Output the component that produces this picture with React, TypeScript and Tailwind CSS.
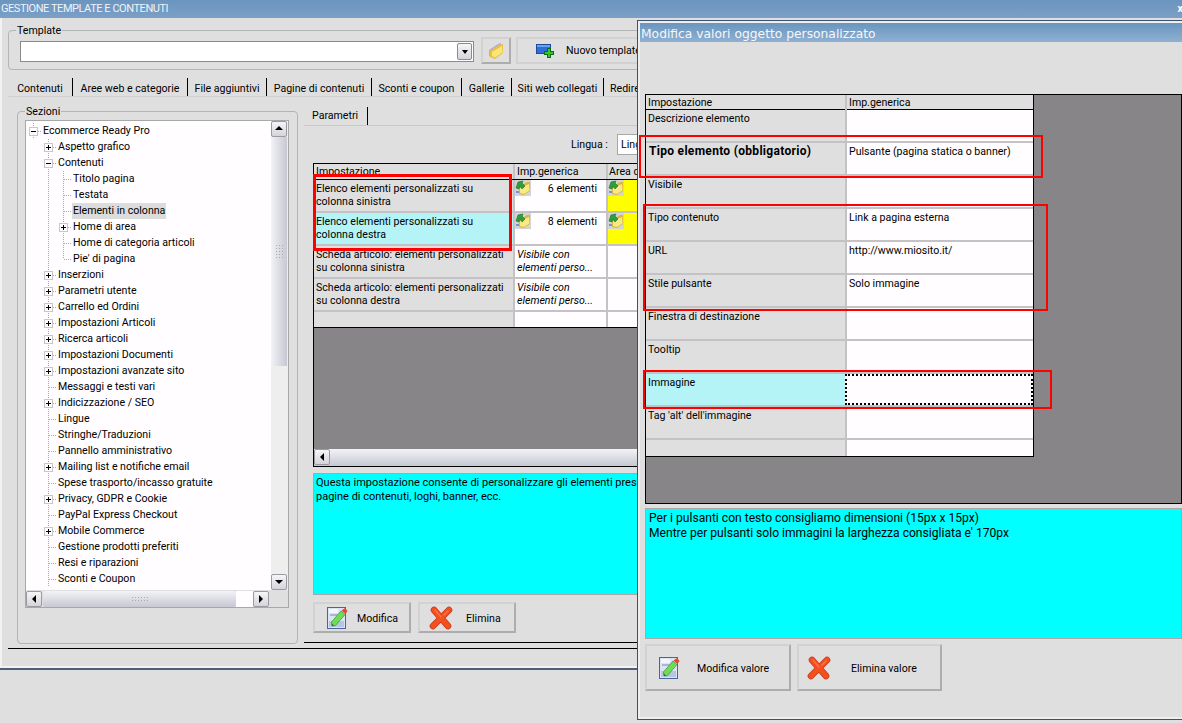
import type { ReactNode } from 'react'

const font = "font-['Roboto',sans-serif] text-[10.6px] text-black"

type Cell = 'plus' | 'minus' | 'branch' | 'last' | 'pass' | 'none'

const tree: { cells: Cell[]; label: string; selected?: boolean }[] = [
  { cells: ['minus'], label: 'Ecommerce Ready Pro' },
  { cells: ['none', 'plus'], label: 'Aspetto grafico' },
  { cells: ['none', 'minus'], label: 'Contenuti' },
  { cells: ['none', 'pass', 'branch'], label: 'Titolo pagina' },
  { cells: ['none', 'pass', 'branch'], label: 'Testata' },
  { cells: ['none', 'pass', 'branch'], label: 'Elementi in colonna', selected: true },
  { cells: ['none', 'pass', 'plus'], label: 'Home di area' },
  { cells: ['none', 'pass', 'branch'], label: 'Home di categoria articoli' },
  { cells: ['none', 'pass', 'last'], label: "Pie' di pagina" },
  { cells: ['none', 'plus'], label: 'Inserzioni' },
  { cells: ['none', 'plus'], label: 'Parametri utente' },
  { cells: ['none', 'plus'], label: 'Carrello ed Ordini' },
  { cells: ['none', 'plus'], label: 'Impostazioni Articoli' },
  { cells: ['none', 'plus'], label: 'Ricerca articoli' },
  { cells: ['none', 'plus'], label: 'Impostazioni Documenti' },
  { cells: ['none', 'plus'], label: 'Impostazioni avanzate sito' },
  { cells: ['none', 'branch'], label: 'Messaggi e testi vari' },
  { cells: ['none', 'plus'], label: 'Indicizzazione / SEO' },
  { cells: ['none', 'branch'], label: 'Lingue' },
  { cells: ['none', 'branch'], label: 'Stringhe/Traduzioni' },
  { cells: ['none', 'branch'], label: 'Pannello amministrativo' },
  { cells: ['none', 'plus'], label: 'Mailing list e notifiche email' },
  { cells: ['none', 'branch'], label: 'Spese trasporto/incasso gratuite' },
  { cells: ['none', 'plus'], label: 'Privacy, GDPR e Cookie' },
  { cells: ['none', 'branch'], label: 'PayPal Express Checkout' },
  { cells: ['none', 'plus'], label: 'Mobile Commerce' },
  { cells: ['none', 'branch'], label: 'Gestione prodotti preferiti' },
  { cells: ['none', 'branch'], label: 'Resi e riparazioni' },
  { cells: ['none', 'branch'], label: 'Sconti e Coupon' },
]

const mainTabs = [
  { label: 'Contenuti', className: 'w-[65px] text-center' },
  { label: 'Aree web e categorie', className: 'w-[115px] text-center' },
  { label: 'File aggiuntivi', className: 'w-[79px] text-center' },
  { label: 'Pagine di contenuti', className: 'w-[105px] text-center' },
  { label: 'Sconti e coupon', className: 'w-[90px] text-center' },
  { label: 'Gallerie', className: 'w-[50px] text-center' },
  { label: 'Siti web collegati', className: 'w-[92px] text-center' },
  { label: 'Redirect', className: 'w-[70px] pl-[6px]' },
]

const modalRows = [
  { label: 'Descrizione elemento', value: '' },
  { label: 'Tipo elemento (obbligatorio)', value: 'Pulsante (pagina statica o banner)', bold: true },
  { label: 'Visibile', value: '' },
  { label: 'Tipo contenuto', value: 'Link a pagina esterna' },
  { label: 'URL', value: 'http://www.miosito.it/' },
  { label: 'Stile pulsante', value: 'Solo immagine' },
  { label: 'Finestra di destinazione', value: '' },
  { label: 'Tooltip', value: '' },
  { label: 'Immagine', value: '', selected: true },
  { label: "Tag 'alt' dell'immagine", value: '' },
]

function TreeCell({ kind }: { kind: Cell }) {
  const dotted = { stroke: '#a8a8a8', strokeDasharray: '1 1' }
  return (
    <svg width="15" height="16" viewBox="0 0 15 16" shapeRendering="crispEdges" className="shrink-0">
      {(kind === 'pass' || kind === 'branch' || kind === 'plus' || kind === 'minus') && (
        <line x1="7.5" y1="0" x2="7.5" y2="16" {...dotted} />
      )}
      {kind === 'last' && <line x1="7.5" y1="0" x2="7.5" y2="8" {...dotted} />}
      {kind !== 'pass' && kind !== 'none' && <line x1="8" y1="8.5" x2="15" y2="8.5" {...dotted} />}
      {(kind === 'plus' || kind === 'minus') && (
        <>
          <rect x="3.5" y="4.5" width="8" height="8" fill="#fffdff" stroke="#c8c8c8" />
          <line x1="5" y1="8.5" x2="10" y2="8.5" stroke="#000" />
          {kind === 'plus' && <line x1="7.5" y1="6" x2="7.5" y2="11" stroke="#000" />}
        </>
      )}
    </svg>
  )
}

function Arrow({ dir }: { dir: 'up' | 'down' | 'left' | 'right' }) {
  const points = {
    up: '1,6 9,6 5,2',
    down: '1,3 9,3 5,7',
    left: '7,1 7,9 3,5',
    right: '3,1 3,9 7,5',
  }[dir]
  return (
    <span className="flex h-[16px] w-[16px] shrink-0 items-center justify-center rounded-[2px] border border-[#9a9aa0] bg-gradient-to-b from-[#f6f6f8] to-[#d4d4da]">
      <svg width="10" height="10" viewBox="0 0 10 10">
        <polygon points={points} fill="#000" />
      </svg>
    </span>
  )
}

function Grip({ vertical }: { vertical?: boolean }) {
  return (
    <span className={vertical ? 'grid grid-cols-3 gap-[2px]' : 'grid grid-cols-6 gap-[2px]'}>
      {Array.from({ length: vertical ? 15 : 12 }).map((_, i) => (
        <span key={i} className="h-[1px] w-[1px] bg-[#a8a8b0]" />
      ))}
    </span>
  )
}

function FolderIcon() {
  return (
    <svg width="18" height="18" viewBox="0 0 18 18">
      <path d="M2 8 L11 2 L14 1 L14 11 L6 16 L2 14 Z" fill="#b9a6e0" />
      <path d="M3 9 L12 3 L16 2 L16 11 L8 17 L3 15 Z" fill="#e8c23c" />
      <path d="M5 10 L15 4 L15.5 10.5 L8 15.5 L5 14 Z" fill="#fbe57a" />
    </svg>
  )
}

// carpella con freccia verde, sfondo grigio come nel reference
function GreenFolderIcon() {
  return (
    <svg width="16" height="16" viewBox="0 0 16 16" className="shrink-0 bg-[#d4d4d4]">
      <path d="M4 7 L12 2 L15 2 L15 11 L9 15 L4 14 Z" fill="#d9b93a" />
      <path d="M5 8 L14 4 L14.5 10.5 L9 14 L5 13 Z" fill="#fbe880" />
      <path d="M1 8 L3 2 L8 1 L7 3 L10 6 L7 9 L5 6 L4 9 Z" fill="#2f9f3c" stroke="#12702a" strokeWidth="0.6" />
      <path d="M1 11 L4 11 L4 13 L1 13 Z" fill="#7d8fd8" />
    </svg>
  )
}

function NewIcon() {
  return (
    <svg width="20" height="18" viewBox="0 0 20 18" shapeRendering="crispEdges">
      <rect x="1.5" y="2.5" width="14" height="9" fill="#2f6fd6" stroke="#1d4aa0" />
      <rect x="2" y="3" width="13" height="2" fill="#6aa0ee" />
      <path d="M9.5 9.5 H12.5 V6.5 H15.5 V9.5 H18.5 V12.5 H15.5 V15.5 H12.5 V12.5 H9.5 Z" fill="#35c23a" stroke="#0d6b14" />
    </svg>
  )
}

function EditIcon() {
  return (
    <svg width="22" height="24" viewBox="0 0 22 24">
      <rect x="0.5" y="1.5" width="18" height="21" fill="#dbe3f6" stroke="#4a649c" />
      <rect x="2" y="3" width="9" height="4" fill="#f4f6fc" />
      <rect x="3" y="8" width="9" height="2" fill="#aab6d6" />
      <rect x="2" y="15" width="15" height="6" fill="#b8c4e2" />
      <path d="M5 20 L4.5 16 L14 5 L18 8.5 L8.5 19.5 Z" fill="#6fdc58" stroke="#3f9e34" strokeWidth="0.8" />
      <path d="M14.5 4.5 L18.5 8 L20.5 5 L18 2 Z" fill="#e0483a" />
      <path d="M5 20 L4.5 17.5 L7 19.5 Z" fill="#39583a" />
    </svg>
  )
}

function CrossIcon() {
  return (
    <svg width="24" height="24" viewBox="0 0 24 24" fill="none" strokeLinecap="round">
      <path d="M5 4 L19 20 M20 4 L4 20" stroke="#c23a22" strokeWidth="6.6" />
      <path d="M5 4 L19 20 M20 4 L4 20" stroke="#f4501e" strokeWidth="5.2" />
      <path d="M6 4 L12 11 M19 5 L15 9" stroke="#fa7446" strokeWidth="1.4" />
    </svg>
  )
}

function WinButton({ className, children }: { className: string; children: ReactNode }) {
  return (
    <button className={`flex items-center border-2 border-[#d2d2d2] border-r-[#adadad] border-b-[#adadad] bg-[#dfdfdf] ${className}`}>
      {children}
    </button>
  )
}

function GroupBox({ label, className, children }: { label: string; className: string; children: ReactNode }) {
  return (
    <fieldset className={`rounded-[4px] border border-[#b4b4b4] ${className}`}>
      <legend className="ml-[7px] px-[1px] pt-[2px] leading-[14px]">{label}</legend>
      {children}
    </fieldset>
  )
}

function TreePanel() {
  return (
    <div className="mx-[7px] mt-[1px] flex h-[488px] w-[264px] flex-col border border-[#a8a8a8] bg-[#fffdff]">
      <div className="flex min-h-0 flex-1">
        <div className="flex-1 pt-[2px]">
          {tree.map((row) => (
            <div key={row.label} className="flex h-[16px] items-center">
              {row.cells.map((cell, i) => (
                <TreeCell key={i} kind={cell} />
              ))}
              <span className={`ml-[1px] px-[1px] leading-[16px] ${row.selected ? 'bg-[#dcdcdc]' : ''}`}>{row.label}</span>
            </div>
          ))}
        </div>
        <div className="flex w-[17px] flex-col bg-[#eeeeee]">
          <Arrow dir="up" />
          <div className="flex h-[229px] w-[16px] items-center justify-center bg-gradient-to-r from-[#f2f2f8] to-[#c8c8d2]">
            <Grip vertical />
          </div>
          <div className="flex-1" />
          <Arrow dir="down" />
        </div>
      </div>
      <div className="flex h-[17px] items-center bg-[#dfdfdf]">
        <Arrow dir="left" />
        <div className="ml-[1px] flex h-[16px] w-[193px] items-center justify-center rounded-[2px] bg-gradient-to-b from-[#f2f2f8] to-[#c8c8d2]">
          <Grip />
        </div>
        <div className="h-[16px] w-[17px] bg-[#fffdff]" />
        <Arrow dir="right" />
      </div>
    </div>
  )
}

function SettingsTable() {
  const rows = [
    { label: 'Elenco elementi personalizzati su colonna sinistra', count: '6 elementi', yellow: true },
    { label: 'Elenco elementi personalizzati su colonna destra', count: '8 elementi', yellow: true, selected: true },
    { label: 'Scheda articolo: elementi personalizzati su colonna sinistra' },
    { label: 'Scheda articolo: elementi personalizzati su colonna destra' },
  ]
  return (
    <div className="mt-[8px] flex h-[304px] flex-col border border-black bg-[#878587]">
      <div className="grid h-[16px] grid-cols-[199px_93px_1fr] border-b border-black bg-[#dfdfdf] leading-[15px]">
        <span className="pl-[2px]">Impostazione</span>
        <span className="border-l-2 border-[#c4c2c4] pl-[2px]">Imp.generica</span>
        <span className="border-l-2 border-[#c4c2c4] pl-[1px]">Area corrente</span>
      </div>
      {rows.map((row) => (
        <div key={row.label} className="grid h-[33px] grid-cols-[199px_93px_1fr] border-b-2 border-[#c4c2c4] bg-[#fffdff] leading-[13px]">
          <div className={`px-[2px] pt-[2px] ${row.selected ? 'bg-[#b4f4f6]' : 'bg-[#dfdfdf]'}`}>{row.label}</div>
          {row.count ? (
            <div className="flex items-start justify-between border-l-2 border-[#c4c2c4] pr-[9px]">
              <GreenFolderIcon />
              <span className="pt-[2px]">{row.count}</span>
            </div>
          ) : (
            <div className="border-l-2 border-[#c4c2c4] pl-[2px] pt-[2px] italic">
              Visibile con
              <br />
              elementi perso...
            </div>
          )}
          <div className={`border-l-2 border-[#c4c2c4] ${row.yellow ? 'bg-[#ffff00]' : ''}`}>{row.yellow && <GreenFolderIcon />}</div>
        </div>
      ))}
      <div className="grid h-[16px] grid-cols-[199px_93px_1fr] border-b border-black bg-[#fffdff]">
        <div className="bg-[#dfdfdf]" />
        <div className="border-l-2 border-[#c4c2c4]" />
        <div className="border-l-2 border-[#c4c2c4]" />
      </div>
      <div className="flex-1" />
      <div className="flex h-[17px] bg-gradient-to-b from-[#f2f2f8] to-[#c8c8d2]">
        <Arrow dir="left" />
      </div>
    </div>
  )
}

function ModifyDialog() {
  return (
    <div className="absolute left-[637px] top-[20px] flex h-[700px] w-[545px] flex-col border border-r-0 border-[#3a5272] bg-[#dfdfdf]">
      <div className="flex h-full flex-col border-2 border-r-0 border-[#eeeeee]">
        <div className="h-[19px] shrink-0 bg-gradient-to-b from-[#6a95bf] to-[#8fb0d2] pl-[1px] pt-[2px] font-['DejaVu_Sans',sans-serif] text-[12.3px] leading-[18px] text-[#f4f8fc]">
          Modifica valori oggetto personalizzato
        </div>
        <div className="pl-[5px] pt-[52px]">
          <div className="h-[410px] border border-black bg-[#878587]">
            <div className="w-[388px] border-r border-b border-black">
              <div className="grid h-[15px] grid-cols-[199px_1fr] border-b border-black bg-[#dfdfdf] leading-[16px]">
                <span className="pl-[2px]">Impostazione</span>
                <span className="border-l-2 border-[#c4c2c4] pl-[2px]">Imp.generica</span>
              </div>
              {modalRows.map((row) => (
                <div key={row.label} className="grid h-[33px] grid-cols-[199px_1fr] border-b-2 border-[#c4c2c4] bg-[#fffdff] leading-[15px]">
                  <div
                    className={`px-[2px] pt-[1px] ${row.selected ? 'bg-[#b4f4f6]' : 'bg-[#dfdfdf]'} ${row.bold ? 'pl-[3px] text-[12px] font-bold tracking-[0.3px]' : ''}`}
                  >
                    {row.label}
                  </div>
                  <div className={`pl-[2px] pt-[1px] ${row.selected ? 'border-2 border-dotted border-black' : 'border-l-2 border-[#c4c2c4]'}`}>
                    {row.value}
                  </div>
                </div>
              ))}
              <div className="grid h-[16px] grid-cols-[199px_1fr] bg-[#fffdff]">
                <div className="bg-[#dfdfdf]" />
                <div className="border-l-2 border-[#c4c2c4]" />
              </div>
            </div>
          </div>
          <div className="mt-[4px] h-[131px] border border-[#a8a8a8] bg-[#00ffff] pl-[3px] pt-[2px] text-[12.1px] leading-[15px]">
            Per i pulsanti con testo consigliamo dimensioni (15px x 15px)
            <br />
            Mentre per pulsanti solo immagini la larghezza consigliata e' 170px
          </div>
          <div className="mt-[5px] flex gap-[6px]">
            <WinButton className="h-[47px] w-[146px] pl-[12px]">
              <EditIcon />
              <span className="ml-[16px] mt-[3px]">Modifica valore</span>
            </WinButton>
            <WinButton className="h-[47px] w-[145px] pl-[8px]">
              <CrossIcon />
              <span className="ml-[20px] mt-[3px]">Elimina valore</span>
            </WinButton>
          </div>
        </div>
      </div>
    </div>
  )
}

export default function App() {
  return (
    <div className={`relative h-[723px] w-[1182px] overflow-hidden bg-[#dfdfdf] ${font}`}>
      <div className="flex h-[18px] items-center justify-between bg-gradient-to-b from-[#6a95bf] to-[#7c9fc6] pl-[1px] leading-[18px] text-[#eef3f8]">
        <span className="text-[11px] tracking-[-0.45px]">GESTIONE TEMPLATE E CONTENUTI</span>
        <span className="-mr-[1px] font-bold text-white">x</span>
      </div>

      <div className="h-[652px] border-b-2 border-[#4f5f78]">
        <div className="h-full border-b-2 border-l-2 border-[#f2f2f2] pt-[4px]">
          <GroupBox label="Template" className="ml-[6px] h-[48px] w-[1160px]">
            <div className="flex items-start pl-[11px] pt-[3px]">
              <div className="flex h-[21px] w-[454px] items-center justify-end border border-[#8a8a8a] bg-white pr-[1px]">
                <span className="flex h-[17px] w-[15px] items-center justify-center rounded-[2px] border border-[#8a8a90] bg-gradient-to-b from-[#f6f6f8] to-[#d4d4da]">
                  <svg width="8" height="8" viewBox="0 0 8 8">
                    <polygon points="1,2 7,2 4,6" fill="#000" />
                  </svg>
                </span>
              </div>
              <button className="-mt-[4px] ml-[7px] flex h-[27px] w-[30px] items-center justify-center border-2 border-[#d2d2d2] border-r-[#adadad] border-b-[#adadad]">
                <FolderIcon />
              </button>
              <button className="-mt-[4px] ml-[5px] flex h-[27px] w-[150px] items-center whitespace-nowrap border-2 border-[#d2d2d2] pl-[17px]">
                <NewIcon />
                <span className="ml-[11px]">Nuovo template</span>
              </button>
            </div>
          </GroupBox>

          <div className="ml-[6px] mt-[8px]">
            <div className="flex h-[19px] border-b border-[#cfcfcf] leading-[22px]">
              {mainTabs.map((tab) => (
                <span key={tab.label} className={`${tab.className} whitespace-nowrap border-r border-black`}>
                  {tab.label}
                </span>
              ))}
            </div>
            <div className="flex h-[552px] w-[1160px] border-b border-black pt-[6px]">
              <GroupBox label="Sezioni" className="ml-[9px] h-[541px] w-[281px]">
                <TreePanel />
              </GroupBox>
              <div className="ml-[6px] mt-[1px] h-[539px] flex-1 border-b border-black pt-[3px]">
                <div className="flex h-[19px] w-full border-b border-[#c8c8c8] leading-[18px]">
                  <span className="w-[64px] border-r border-black pl-[8px]">Parametri</span>
                </div>
                <div className="pl-[9px]">
                  <div className="mt-[8px] flex h-[21px] items-center pl-[258px]">
                    <span className="w-[46px]">Lingua :</span>
                    <span className="flex h-[21px] w-[200px] items-center border border-[#a8a8a8] bg-white pl-[3px]">Lingua</span>
                  </div>
                  <SettingsTable />
                  <div className="mt-[6px] h-[122px] border border-[#a8a8a8] bg-[#00ffff] pl-[2px] pt-[2px] text-[11px] leading-[14px]">
                    Questa impostazione consente di personalizzare gli elementi presenti nelle colonne del sito, come menu,
                    <br />
                    pagine di contenuti, loghi, banner, ecc.
                  </div>
                  <div className="mt-[7px] flex gap-[7px]">
                    <WinButton className="h-[31px] w-[98px] pl-[12px]">
                      <EditIcon />
                      <span className="ml-[8px] mt-[3px]">Modifica</span>
                    </WinButton>
                    <WinButton className="h-[31px] w-[98px] pl-[9px]">
                      <CrossIcon />
                      <span className="ml-[13px] mt-[3px]">Elimina</span>
                    </WinButton>
                  </div>
                </div>
              </div>
            </div>
          </div>
        </div>
      </div>

      <ModifyDialog />

      {/* annotazioni rosse sopra lo screenshot */}
      <div className="absolute left-[313px] top-[174px] h-[77px] w-[199px] border-[3px] border-[#ff0000]" />
      <div className="absolute left-[639px] top-[135px] h-[43px] w-[404px] border-[2px] border-[#ff0000]" />
      <div className="absolute left-[643px] top-[204px] h-[107px] w-[405px] border-[2px] border-[#ff0000]" />
      <div className="absolute left-[643px] top-[370px] h-[39px] w-[409px] border-[2px] border-[#ff0000]" />
    </div>
  )
}
